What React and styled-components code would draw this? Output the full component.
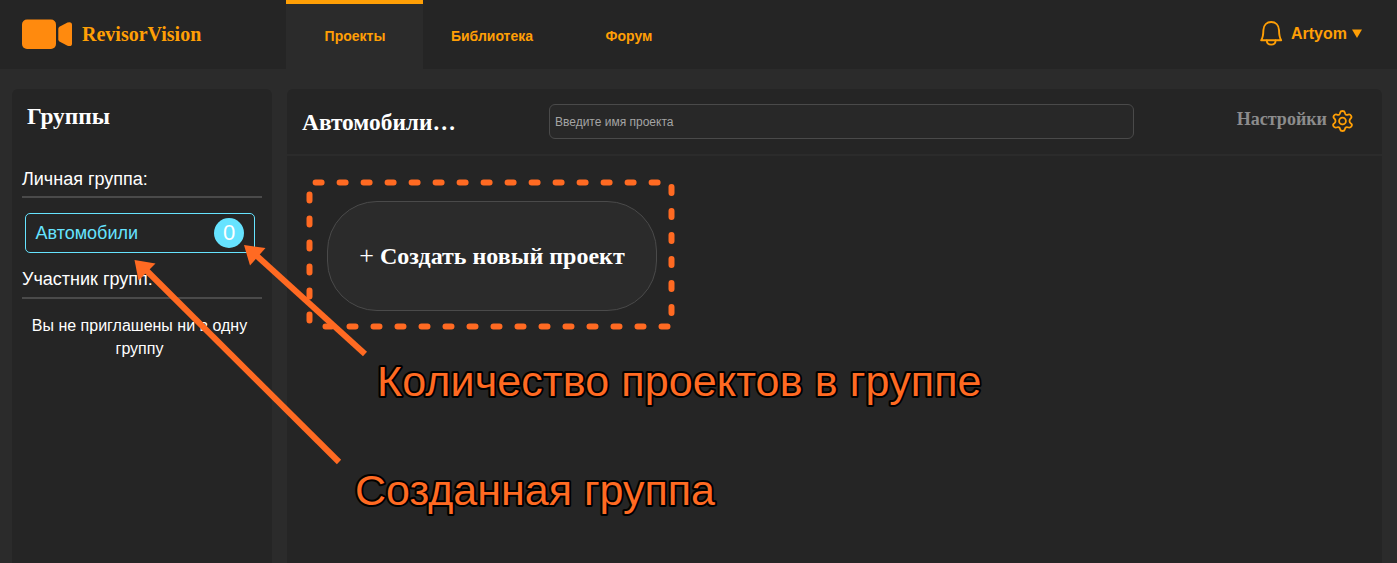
import React from 'react';
import styled, { createGlobalStyle } from 'styled-components';

const GlobalStyle = createGlobalStyle`
  *, *::before, *::after { box-sizing: border-box; }
  html, body { margin: 0; background: #2b2b2b; }
  body { font-family: "Liberation Sans", Arial, sans-serif; color: #fff; overflow: hidden; }
  h1, h2, p { margin: 0; }
`;

const Page = styled.div`
  position: relative;
  display: flex;
  flex-direction: column;
  height: 100vh;
  overflow: hidden;
`;

const Header = styled.header`
  display: flex;
  flex: none;
  height: 69px;
  background: #252525;
  color: #ff9f05;
`;

const Brand = styled.a`
  display: flex;
  align-items: center;
  gap: 10px;
  width: 286px;
  padding-left: 22px;
  font: bold 20px/24px "Liberation Serif", "Times New Roman", serif;
`;

const BrandName = styled.span`
  padding-bottom: 2px;
`;

const Nav = styled.nav`
  display: flex;
  flex: 1;
`;

const Tab = styled.a`
  width: 137px;
  padding: 24px 0 0 1px;
  border-top: 4px solid ${({ $active }) => ($active ? '#ff9f05' : 'transparent')};
  background: ${({ $active }) => ($active ? '#2b2b2b' : 'transparent')};
  font-size: 14px;
  font-weight: bold;
  line-height: 16px;
  text-align: center;
`;

const User = styled.div`
  display: flex;
  align-items: center;
  height: 67px;
  padding-right: 35px;
  font-size: 16px;
  font-weight: bold;
`;

const UserName = styled.span`
  margin: 0 5px 0 8px;
`;

const Content = styled.div`
  display: flex;
  flex: 1;
  gap: 15px;
  min-height: 0;
  padding: 20px 15px 0 12px;
`;

const Sidebar = styled.aside`
  flex: none;
  width: 260px;
  padding: 13px 10px 0;
  border-radius: 6px 6px 0 0;
  background: #252525;
`;

const Title = styled.h1`
  font: bold 23.4px/28px "Liberation Serif", "Times New Roman", serif;
`;

const SidebarTitle = styled(Title)`
  margin: 0 0 37px 5px;
`;

const GroupLabel = styled.div`
  height: ${({ $tall }) => ($tall ? '35px' : '31px')};
  padding-top: ${({ $tall }) => ($tall ? '3px' : '0')};
  border-bottom: 2px solid #4a4a4a;
  font-size: 18px;
  line-height: 24px;
`;

const Group = styled.div`
  display: flex;
  align-items: center;
  justify-content: space-between;
  height: 40px;
  margin: 15px 7px 11px 3px;
  padding: 0 10px 0 9.5px;
  border: 1px solid #66e3ff;
  border-radius: 5px;
  color: #66e3ff;
  font-size: 18px;
`;

const Count = styled.span`
  width: 30px;
  height: 30px;
  border-radius: 50%;
  background: #66e3ff;
  color: #fff;
  font-size: 22px;
  line-height: 30px;
  text-align: center;
`;

const EmptyNote = styled.p`
  margin: 15px 5px 0 0;
  font-size: 16px;
  line-height: 23px;
  text-align: center;
`;

const Main = styled.main`
  flex: 1;
  border-radius: 6px 6px 0 0;
  background: #252525;
`;

const Toolbar = styled.div`
  display: flex;
  height: 67px;
  padding: 15px 29px 0 15px;
  border-bottom: 2px solid #2b2b2b;
`;

const ProjectTitle = styled(Title)`
  width: 247px;
  padding-top: 4px;
`;

const Search = styled.input`
  width: 585px;
  height: 35px;
  padding: 0 5px;
  border: 1px solid #4a4a4a;
  border-radius: 6px;
  outline: none;
  background: #282828;
  color: #fff;
  font: 12px "Liberation Sans", Arial, sans-serif;
  &::placeholder { color: #a4a4a4; opacity: 1; }
`;

const Settings = styled.a`
  display: flex;
  gap: 5px;
  margin-left: auto;
  padding-top: 4px;
  color: #8c8c8c;
  font: bold 18px/22px "Liberation Serif", "Times New Roman", serif;
  svg { margin-top: 2px; }
`;

const CreateButton = styled.button`
  display: block;
  width: 330px;
  height: 110px;
  margin: 45px 0 0 40px;
  padding: 0;
  border: 1px solid #4a4a4a;
  border-radius: 50px;
  background: #2b2b2b;
  color: #fff;
  font: bold 24px/28px "Liberation Serif", "Times New Roman", serif;
`;

const Plus = styled.span`
  font-size: 26px;
  font-weight: normal;
  line-height: 20px;
`;

const Annotations = styled.svg`
  position: absolute;
  inset: 0;
  pointer-events: none;
`;

const Caption = styled.text`
  fill: #ff6a22;
  stroke: #000;
  stroke-width: 4px;
  stroke-linejoin: round;
  paint-order: stroke;
  font: 43px "Liberation Sans", Arial, sans-serif;
  letter-spacing: ${({ $spacing }) => $spacing || '0'};
`;

const CameraIcon = () => (
  <svg width="50" height="31" viewBox="0 0 50 31" fill="#ff8a0e">
    <rect x="0" y="0.5" width="34" height="29.5" rx="5" />
    <path d="M36.3 9.8Q36.3 8.6 37.4 7.8L45.5 3.6Q50 2.4 50 6V24.5Q50 28 45.5 26.8L37.4 22.4Q36.3 21.7 36.3 20.5Z" />
  </svg>
);

const BellIcon = () => (
  <svg width="23" height="25" viewBox="0 0 23 25" fill="none" stroke="#ff9f05" strokeWidth="1.9" strokeLinejoin="round" strokeLinecap="round">
    <path d="M1.2 19.2H21.2C19.3 16.5 19.1 14 19 9C18.8 4 15.5 1 11.2 1S3.6 4 3.4 9C3.3 14 3.1 16.5 1.2 19.2Z" />
    <path d="M6.8 19.5C7 25 15.4 25 15.6 19.5" />
  </svg>
);

const GearIcon = () => (
  <svg width="21" height="22" viewBox="0 0 21 22" fill="none" stroke="#ff9f05" strokeWidth="1.8" strokeLinejoin="round">
    <path d="M8.2 2.5Q8.5 1 10.5 1T12.8 2.5C13 4.8 14.3 5.3 16.2 4.6Q18 3.9 19 5.6T18.9 8.3C17 9.8 17 12 18.9 13.5Q20.6 14.6 19.5 16.3T16.5 17.5C14.5 16.7 13.1 17.3 12.8 19.5Q12.5 21 10.5 21T8.2 19.5C7.9 17.3 6.5 16.7 4.5 17.5Q2.6 18 1.5 16.3T2.1 13.5C4 12 4 9.8 2.1 8.3Q.9 7.2 2 5.6T4.8 4.6C6.7 5.3 8 4.8 8.2 2.5Z" />
    <circle cx="10.5" cy="11" r="3.4" />
  </svg>
);

export default function App() {
  return (
    <Page>
      <GlobalStyle />
      <Header>
        <Brand><CameraIcon /><BrandName>RevisorVision</BrandName></Brand>
        <Nav>
          <Tab $active>Проекты</Tab>
          <Tab>Библиотека</Tab>
          <Tab>Форум</Tab>
        </Nav>
        <User>
          <BellIcon />
          <UserName>Artyom</UserName>
          <svg width="10" height="9" viewBox="0 0 10 9"><path d="M0 0.5H10L5 9Z" fill="#ff9f05" /></svg>
        </User>
      </Header>
      <Content>
        <Sidebar>
          <SidebarTitle>Группы</SidebarTitle>
          <GroupLabel>Личная группа:</GroupLabel>
          <Group>Автомобили<Count>0</Count></Group>
          <GroupLabel $tall>Участник групп:</GroupLabel>
          <EmptyNote>Вы не приглашены ни в одну группу</EmptyNote>
        </Sidebar>
        <Main>
          <Toolbar>
            <ProjectTitle>Автомобили…</ProjectTitle>
            <Search placeholder="Введите имя проекта" />
            <Settings>Настройки<GearIcon /></Settings>
          </Toolbar>
          <CreateButton><Plus>+</Plus> Создать новый проект</CreateButton>
        </Main>
      </Content>
      <Annotations width="1397" height="563">
        <g fill="none" stroke="#ff6a22" strokeWidth="6" strokeLinecap="round" strokeDasharray="6 18">
          <path d="M315.6 182.5H661" />
          <path d="M671.5 187V313" />
          <path d="M667.5 326.5H320" />
          <path d="M309.5 320.5V190" />
        </g>
        <g stroke="#ff6a22" strokeWidth="6">
          <path d="M365 354L257 256" />
          <path d="M339 462L147 271" />
        </g>
        <g fill="#ff6a22">
          <path d="M244 245L265.5 248L250 265.5Z" />
          <path d="M134.5 260L155.5 263.5L138.5 280.5Z" />
        </g>
        <Caption x="377" y="396" $spacing="0.13px">Количество проектов в группе</Caption>
        <Caption x="355" y="505">Созданная группа</Caption>
      </Annotations>
    </Page>
  );
}
